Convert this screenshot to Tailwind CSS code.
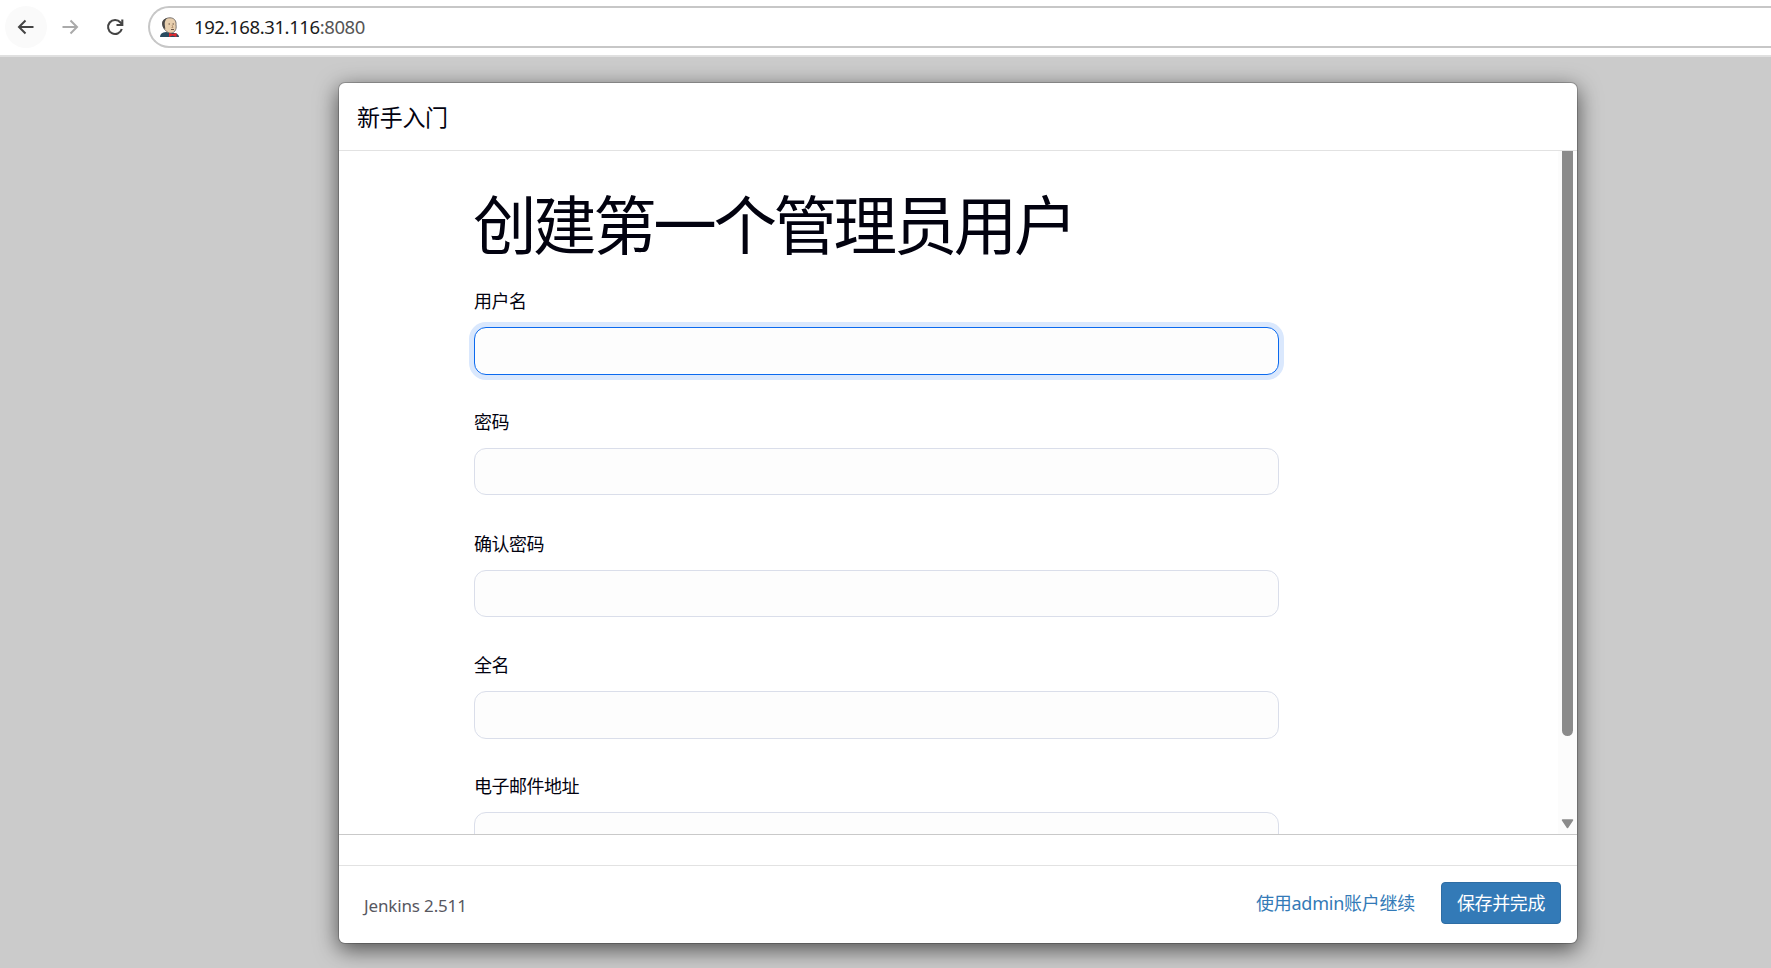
<!DOCTYPE html>
<html lang="zh-CN">
<head>
    <meta charset="UTF-8">
    <meta name="viewport" content="width=device-width, initial-scale=1.0">
    <title>新手入门 [Jenkins]</title>
    <script src="https://cdn.jsdelivr.net/npm/@tailwindcss/browser@4"></script>
</head>
<body class="h-screen overflow-hidden flex flex-col bg-[#cbcbcb] font-['Noto_Sans','Noto_Sans_CJK_SC',sans-serif] text-[#02020f]">
    <!-- Browser bar -->
    <div class="h-[57px] shrink-0 flex items-start bg-white border-b-2 border-[#e0e0e0] pt-[6px] pl-[5px]">
        <div class="size-[42px] rounded-full bg-[#fafafa] flex items-center justify-center">
            <svg class="size-[18px]" viewBox="0 0 18 18" fill="none" stroke="#444" stroke-width="2"><path d="M16.500 9H2.500M8.500 2.500L2 9l6.500 6.500"/></svg>
        </div>
        <div class="ml-[2px] size-[42px] flex items-center justify-center">
            <svg class="size-[18px]" viewBox="0 0 18 18" fill="none" stroke="#aaa" stroke-width="2"><path d="M1.500 9h14M9.500 2.500L16 9l-6.500 6.500"/></svg>
        </div>
        <div class="ml-[3px] size-[42px] flex items-center justify-center">
            <svg class="size-[18px]" viewBox="0 0 18 18" fill="none" stroke="#444" stroke-width="2.100"><path d="M15.800 11a7 7 0 1 1-1.300-6.500L16 6"/><path d="M16.300 1.500V7H10.500"/></svg>
        </div>
        <div class="ml-[12px] flex-1 h-[42px] flex items-center rounded-l-full border-2 border-r-0 border-[#c7c7c7] pl-[10px]">
            <svg class="w-[20px] h-[20px]" viewBox="0 0 20 20">
                <path d="M0 20c0-3 2-4.500 6-5l7 1c3.500 0 6 1.500 6 4z" fill="#294b60"/>
                <path d="M3 8C2 3 6 .800 10 .800s6.500 3 6 7c.5 3 0 4.500-1 6-1.500 2.500-5 3-7 1.500C6 14 3.500 12.500 3 8z" fill="#e8cfae" stroke="#5a5654" stroke-width=".8"/>
                <path d="M2.500 9C1 4 4 1.500 7 1.200 5 3.500 4.500 5 4.800 8l.5 4C3.500 11.500 3 10.500 2.500 9z" fill="#4c4a49"/>
                <path d="M8.500 7h1.500M12.500 7h1.500M11 12.500h3" stroke="#5b4437" stroke-width=".9"/>
                <path d="M12 8l1 2.500h-1.500" fill="none" stroke="#a98866" stroke-width=".8"/>
                <path d="M9 16l3.500 1 4-1v4l-4-1.500L9 20z" fill="#e2282d"/>
            </svg>
            <span class="ml-[14px] text-[18.500px] tracking-[-0.400px] text-[#1b1b1b]">192.168.31.116<span class="text-[#555]">:8080</span></span>
        </div>
    </div>

    <!-- Setup wizard dialog -->
    <div class="mt-[25px] ml-[338px] w-[1240px] h-[862px] shrink-0 flex flex-col bg-white bg-clip-padding border border-black/20 rounded-[7px] shadow-[0_6px_22px_rgba(0,0,0,0.6)] overflow-hidden">
        <div class="h-[68px] shrink-0 flex items-center pl-[18px] pt-px border-b border-[#e2e2e2]">
            <h4 class="text-[23px] tracking-[-0.300px]">新手入门</h4>
        </div>

        <div class="h-[684px] shrink-0 flex justify-between overflow-hidden border-b border-[#c9c9c9]">
            <form class="ml-[135px] w-[805px] pt-[39px] h-[683px] overflow-visible">
                <h1 class="h-[70px] leading-[70px] -ml-px text-[63.500px] tracking-[-3.400px] whitespace-nowrap">创建第一个管理员用户</h1>
                <div class="h-[121.300px] pt-[25px] mt-[3px]">
                    <label class="block h-[39px] leading-[26px] text-[18px] tracking-[-0.500px]">用户名</label>
                    <input type="text" class="block w-full h-[48px] rounded-[12px] border border-[#0b6aef] bg-[#fdfdfd] ring-5 ring-[#dae8fd] outline-none">
                </div>
                <div class="h-[121.300px] pt-[25px]">
                    <label class="block h-[39px] leading-[26px] text-[18px] tracking-[-0.500px]">密码</label>
                    <input type="password" class="block w-full h-[47px] rounded-[12px] border border-[#dadeea] bg-[#fdfdfd]">
                </div>
                <div class="h-[121.300px] pt-[25px]">
                    <label class="block h-[39px] leading-[26px] text-[18px] tracking-[-0.500px]">确认密码</label>
                    <input type="password" class="block w-full h-[47px] rounded-[12px] border border-[#dadeea] bg-[#fdfdfd]">
                </div>
                <div class="h-[121.300px] pt-[25px]">
                    <label class="block h-[39px] leading-[26px] text-[18px] tracking-[-0.500px]">全名</label>
                    <input type="text" class="block w-full h-[48px] rounded-[12px] border border-[#dadeea] bg-[#fdfdfd]">
                </div>
                <div class="h-[121.300px] pt-[25px]">
                    <label class="block h-[39px] leading-[26px] text-[18px] tracking-[-0.500px]">电子邮件地址</label>
                    <input type="text" class="block w-full h-[48px] rounded-[12px] border border-[#dadeea] bg-[#fdfdfd]">
                </div>
            </form>
            <!-- Scrollbar -->
            <div class="w-[19px] bg-[#fcfcfc] flex flex-col items-center justify-between pb-[5px]">
                <div class="w-[11px] h-[585px] rounded-b-full bg-[#8b8b8b]"></div>
                <svg class="w-[13px] h-[10px]" viewBox="0 0 13 10"><path d="M1.500 1h10L6.500 8.500z" fill="#8b8b8b" stroke="#8b8b8b" stroke-width="1.500" stroke-linejoin="round"/></svg>
            </div>
        </div>

        <div class="h-[31px] shrink-0 border-b border-[#e2e2e2]"></div>

        <div class="flex-1 flex items-center justify-between pl-[25px] pr-[16px] pb-[3px]">
            <span class="pt-[6px] text-[17px] tracking-[-0.150px] text-[#57575f]">Jenkins 2.511</span>
            <div class="flex items-center gap-[26px]">
                <a href="#" class="text-[18px] tracking-[-0.250px] text-[#337ab7]">使用admin账户继续</a>
                <button class="w-[120px] h-[42px] rounded-[4px] border border-[#2e6da4] bg-[#337ab7] text-white text-[18px] tracking-[-0.400px]">保存并完成</button>
            </div>
        </div>
    </div>
</body>
</html>
